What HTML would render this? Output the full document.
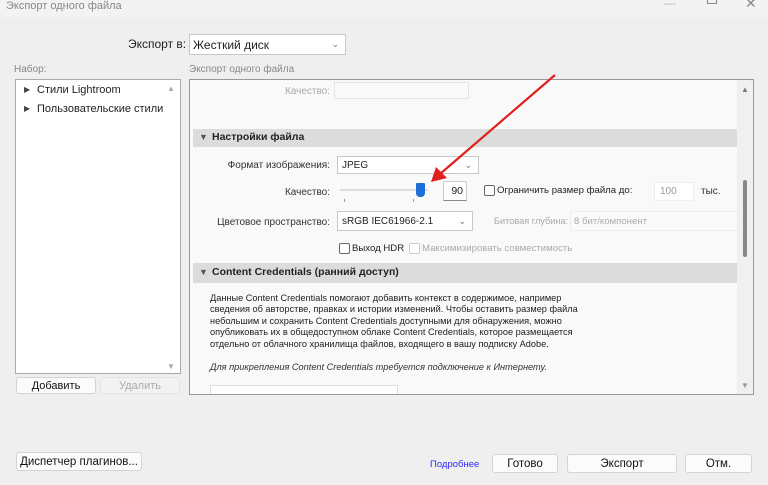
<!DOCTYPE html>
<html><head><meta charset="utf-8"><style>
*{margin:0;padding:0;box-sizing:border-box}
body{width:768px;height:485px;background:#efefef;font-family:"Liberation Sans","DejaVu Sans",sans-serif;font-size:11px;color:#222;position:relative;overflow:hidden}
.a{position:absolute;white-space:nowrap}
.box{position:absolute;background:#fff;border:1px solid #c8c8c8}
.btn{position:absolute;background:#fbfbfb;border:1px solid #d4d4d4;border-radius:3px;display:flex;align-items:center;justify-content:center;font-size:11.5px;color:#111}
.lbl{position:absolute;text-align:right;font-size:10px;color:#333}
.dd{position:absolute;background:#fff;border:1px solid #c8c8c8;font-size:10px;padding:3px 4px}
.chev{position:absolute;right:6px;top:3px;color:#777;font-size:9px}
.cb{position:absolute;width:11px;height:11px;border:1px solid #666;border-radius:2px;background:#fff}
</style></head><body>
<div class="a" style="left:0;top:0;width:768px;height:17px;background:#f3f3f3"></div>
<div class="a" style="left:6px;top:0;font-size:11px;color:#888">Экспорт одного файла</div>
<div class="a" style="left:664px;top:-4px;color:#bbb;font-size:12px">—</div>
<div class="a" style="left:707px;top:-6px;width:10px;height:10px;border:1px solid #888"></div>
<div class="a" style="left:745px;top:-5px;color:#888;font-size:14px">✕</div>

<div class="a" style="left:128px;top:37px;font-size:12px">Экспорт в:</div>
<div class="dd" style="left:189px;top:34px;width:157px;height:21px;font-size:12px;padding:3px 3px">Жесткий диск<span class="chev" style="top:4px">⌄</span></div>

<div class="a" style="left:14px;top:64px;font-size:10px;color:#888">Набор:</div>
<div class="a" style="left:189px;top:64px;font-size:10px;color:#888">Экспорт одного файла</div>

<div class="box" style="left:15px;top:79px;width:166px;height:295px;border-color:#aaa"></div>
<div class="a" style="left:24px;top:85px;font-size:8px;color:#444">▶</div>
<div class="a" style="left:37px;top:84px;font-size:11px">Стили Lightroom</div>
<div class="a" style="left:24px;top:104px;font-size:8px;color:#444">▶</div>
<div class="a" style="left:37px;top:103px;font-size:11px">Пользовательские стили</div>
<div class="a" style="left:167px;top:84px;font-size:8px;color:#aaa">▲</div>
<div class="a" style="left:167px;top:362px;font-size:8px;color:#aaa">▼</div>
<div class="btn" style="left:16px;top:377px;width:80px;height:17px;font-size:11px">Добавить</div>
<div class="btn" style="left:100px;top:377px;width:80px;height:17px;font-size:11px;color:#aaa;background:#f2f2f2;border-color:#e3e3e3">Удалить</div>

<div class="box" style="left:189px;top:79px;width:565px;height:316px;border-color:#999;background:#f9f9f9"></div>
<div class="a" style="left:737px;top:80px;width:16px;height:314px;background:#f0f0f0"></div>
<div class="a" style="left:741px;top:85px;font-size:8px;color:#777">▲</div>
<div class="a" style="left:741px;top:381px;font-size:8px;color:#999">▼</div>
<div class="a" style="left:743px;top:180px;width:4px;height:77px;background:#888;border-radius:2px"></div>

<div class="lbl" style="left:250px;top:86px;width:80px;color:#aaa">Качество:</div>
<div class="a" style="left:334px;top:82px;width:135px;height:17px;border:1px solid #e3e3e3;background:#fafafa"></div>

<div class="a" style="left:193px;top:129px;width:544px;height:18px;background:#dcdcdc"></div>
<div class="a" style="left:199px;top:132px;font-size:9px;color:#555">▼</div>
<div class="a" style="left:212px;top:131px;font-size:10.5px;font-weight:bold">Настройки файла</div>

<div class="lbl" style="left:220px;top:160px;width:110px">Формат изображения:</div>
<div class="dd" style="left:337px;top:156px;width:142px;height:18px">JPEG<span class="chev">⌄</span></div>
<div class="lbl" style="left:250px;top:187px;width:80px">Качество:</div>
<div class="a" style="left:340px;top:189px;width:88px;height:2px;background:#ddd"></div>
<div class="a" style="left:416px;top:183px;width:9px;height:14px;background:#1d6ed6;border-radius:1px 1px 4px 4px"></div>
<div class="a" style="left:344px;top:199px;width:1px;height:3px;background:#999"></div>
<div class="a" style="left:413px;top:199px;width:1px;height:3px;background:#999"></div>
<div class="a" style="left:443px;top:181px;width:24px;height:20px;background:#fff;border:1px solid #ccc;border-bottom-color:#888;text-align:right;padding:3px 3px;font-size:10.5px">90</div>
<div class="cb" style="left:484px;top:185px"></div>
<div class="a" style="left:497px;top:185px;font-size:9.6px">Ограничить размер файла до:</div>
<div class="a" style="left:654px;top:182px;width:40px;height:19px;background:#fff;border:1px solid #eee;padding:3px 5px;color:#999;font-size:10px">100</div>
<div class="a" style="left:701px;top:186px;font-size:10px;color:#333">тыс.</div>

<div class="lbl" style="left:200px;top:217px;width:130px">Цветовое пространство:</div>
<div class="dd" style="left:337px;top:211px;width:136px;height:20px;padding-top:4px">sRGB IEC61966-2.1<span class="chev" style="top:4px">⌄</span></div>
<div class="a" style="left:494px;top:216px;font-size:9.2px;color:#aaa">Битовая глубина:</div>
<div class="a" style="left:570px;top:211px;width:168px;height:20px;border:1px solid #eee;background:#fafafa;padding:4px 3px;font-size:9.6px;color:#aaa">8 бит/компонент</div>
<div class="cb" style="left:339px;top:243px"></div>
<div class="a" style="left:352px;top:243px;font-size:9.6px">Выход HDR</div>
<div class="cb" style="left:409px;top:243px;border-color:#ccc"></div>
<div class="a" style="left:422px;top:243px;font-size:9.6px;color:#aaa">Максимизировать совместимость</div>

<div class="a" style="left:193px;top:263px;width:544px;height:20px;background:#dcdcdc"></div>
<div class="a" style="left:199px;top:267px;font-size:9px;color:#555">▼</div>
<div class="a" style="left:212px;top:266px;font-size:10.5px;font-weight:bold">Content Credentials (ранний доступ)</div>
<div class="a" style="left:210px;top:293px;font-size:9.2px;line-height:11.4px;color:#222">Данные Content Credentials помогают добавить контекст в содержимое, например<br>сведения об авторстве, правках и истории изменений. Чтобы оставить размер файла<br>небольшим и сохранить Content Credentials доступными для обнаружения, можно<br>опубликовать их в общедоступном облаке Content Credentials, которое размещается<br>отдельно от облачного хранилища файлов, входящего в вашу подписку Adobe.</div>
<div class="a" style="left:210px;top:362px;font-size:9.2px;font-style:italic;color:#333">Для прикрепления Content Credentials требуется подключение к Интернету.</div>
<div class="a" style="left:210px;top:385px;width:188px;height:9px;border:1px solid #ddd;border-bottom:none;background:#fff"></div>

<div class="btn" style="left:16px;top:452px;width:126px;height:19px">Диспетчер плагинов...</div>
<div class="a" style="left:430px;top:459px;font-size:9.5px;color:#2a2aff">Подробнее</div>
<div class="btn" style="left:492px;top:454px;width:66px;height:19px">Готово</div>
<div class="btn" style="left:567px;top:454px;width:110px;height:19px">Экспорт</div>
<div class="btn" style="left:685px;top:454px;width:67px;height:19px">Отм.</div>

<svg class="a" style="left:0;top:0" width="768" height="485"><line x1="555" y1="75" x2="440" y2="174" stroke="#e0201c" stroke-width="2.2"/><polygon points="431,182 436,167 447,178" fill="#e0201c"/></svg>
</body></html>
